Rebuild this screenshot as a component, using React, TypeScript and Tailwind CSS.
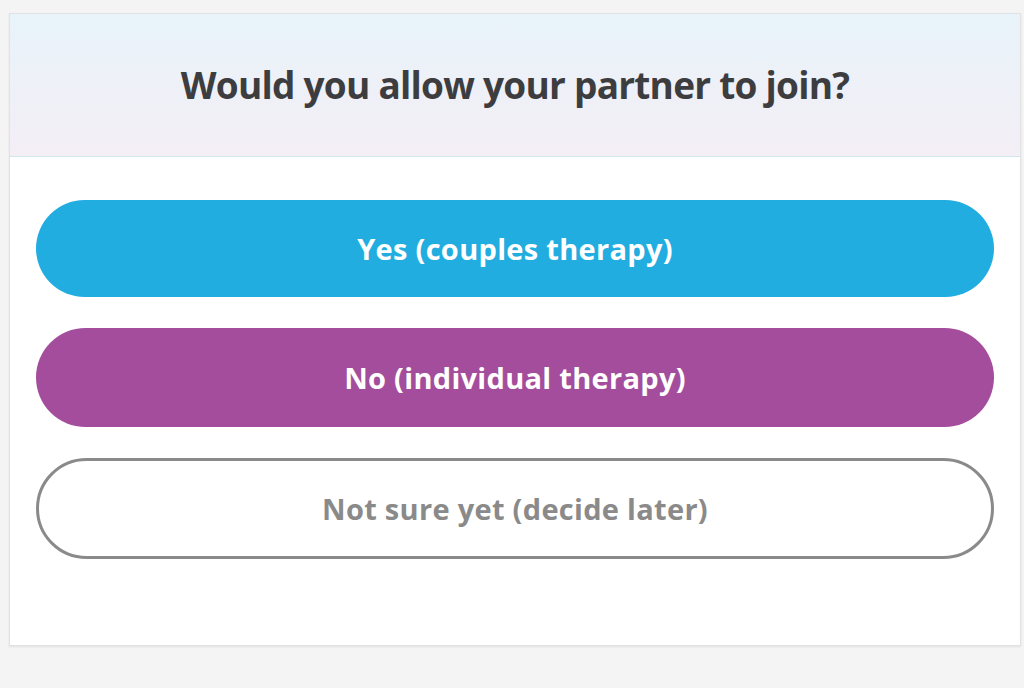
export default function App() {
  const font = { fontFamily: "'Open Sans', 'Noto Sans', sans-serif" };

  return (
    <main className="w-[1024px] h-[688px] bg-[#f4f4f4] pt-[13px] pl-[9px] pr-[3px]" style={font}>
      <div className="bg-white border border-[#e2e2e2] shadow-[0_1px_2px_rgba(0,0,0,0.08)]">
        {/* Header */}
        <div className="h-[143px] flex items-center justify-center bg-gradient-to-b from-[#e8f3fa] to-[#f4eef5] border-b border-[#cfe6ec]">
          <h1 className="text-[37px] font-bold text-[#3d3d40] tracking-[-0.75px] pb-[1px]">
            Would you allow your partner to join?
          </h1>
        </div>

        {/* Options */}
        <div className="px-[26px] pt-[43px] pb-[86px] flex flex-col gap-[31px]">
          <button className="h-[97px] w-full rounded-full bg-[#22ade0] text-white text-[29px] font-bold tracking-[0.3px]">
            Yes (couples therapy)
          </button>
          <button className="h-[99px] w-full rounded-full bg-[#a34d9c] text-white text-[29px] font-bold tracking-[0.3px]">
            No (individual therapy)
          </button>
          <button className="h-[101px] w-full rounded-full bg-white border-[3px] border-[#8a8a8a] text-[#8a8a8a] text-[29px] font-bold tracking-[0.3px]">
            Not sure yet (decide later)
          </button>
        </div>
      </div>
    </main>
  );
}
